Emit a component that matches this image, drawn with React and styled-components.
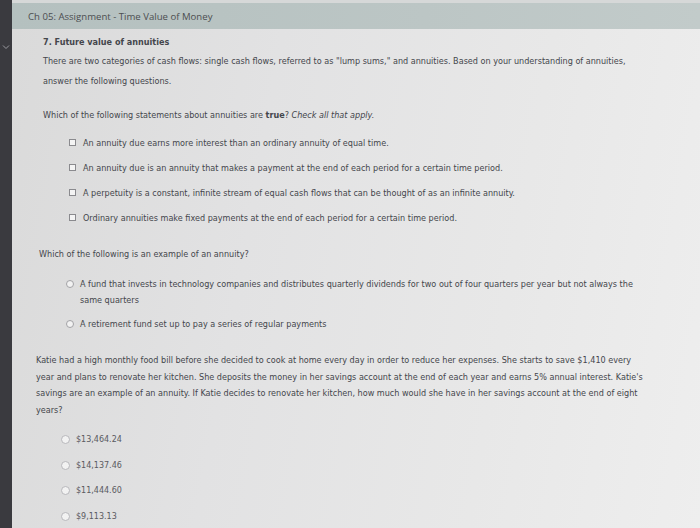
import React from 'react'
import styled, { createGlobalStyle } from 'styled-components'

const GlobalStyle = createGlobalStyle`
    html, body {
        margin: 0;
        padding: 0;
        background: #3a3a3f;
    }
`

const checks = [
    'An annuity due earns more interest than an ordinary annuity of equal time.',
    'An annuity due is an annuity that makes a payment at the end of each period for a certain time period.',
    'A perpetuity is a constant, infinite stream of equal cash flows that can be thought of as an infinite annuity.',
    'Ordinary annuities make fixed payments at the end of each period for a certain time period.',
]

const amounts = ['$13,464.24', '$14,137.46', '$11,444.60', '$9,113.13']

function App() {
    return (
        <Screen>
            <GlobalStyle />
            <Sidebar>
                <Chevron viewBox="0 0 8 6">
                    <path d="M1 1.5 L4 4.5 L7 1.5" fill="none" stroke="#9a9aa0" strokeWidth="1" />
                </Chevron>
            </Sidebar>
            <Main>
                <TopStrip />
                <Header>Ch 05: Assignment - Time Value of Money</Header>
                <Content>
                    <Block indent={31}>
                        <Heading>7. Future value of annuities</Heading>
                        <Para>
                            There are two categories of cash flows: single cash flows, referred to as "lump sums," and annuities. Based on your understanding of annuities,<br />
                            answer the following questions.
                        </Para>
                        <Question>
                            Which of the following statements about annuities are <b>true</b>? <i>Check all that apply.</i>
                        </Question>
                        <CheckList>
                            {checks.map(c => (
                                <CheckRow key={c}>
                                    <Box />
                                    <span>{c}</span>
                                </CheckRow>
                            ))}
                        </CheckList>
                    </Block>
                    <Block indent={27}>
                        <Question2>Which of the following is an example of an annuity?</Question2>
                        <RadioList>
                            <RadioRow>
                                <Circle />
                                <span>
                                    A fund that invests in technology companies and distributes quarterly dividends for two out of four quarters per year but not always the<br />
                                    same quarters
                                </span>
                            </RadioRow>
                            <RadioRow>
                                <Circle />
                                <span>A retirement fund set up to pay a series of regular payments</span>
                            </RadioRow>
                        </RadioList>
                    </Block>
                    <Block indent={24}>
                        <Story>
                            Katie had a high monthly food bill before she decided to cook at home every day in order to reduce her expenses. She starts to save $1,410 every<br />
                            year and plans to renovate her kitchen. She deposits the money in her savings account at the end of each year and earns 5% annual interest. Katie's<br />
                            savings are an example of an annuity. If Katie decides to renovate her kitchen, how much would she have in her savings account at the end of eight<br />
                            years?
                        </Story>
                        <Amounts>
                            {amounts.map(a => (
                                <AmountRow key={a}>
                                    <Circle />
                                    <span>{a}</span>
                                </AmountRow>
                            ))}
                        </Amounts>
                    </Block>
                </Content>
                <Bezel />
            </Main>
        </Screen>
    )
}

export default App

const Screen = styled.div`
    display: flex;
    width: 700px;
    height: 528px;
    overflow: hidden;
    font-family: "DejaVu Sans", Verdana, sans-serif;
    color: #44464c;
`
const Sidebar = styled.div`
    width: 12px;
    flex-shrink: 0;
    background: #3a3a3f;
    display: flex;
    flex-direction: column;
    align-items: center;
    padding-top: 44px;
    box-sizing: border-box;
`
const Chevron = styled.svg`
    width: 8px;
    height: 6px;
`
const Main = styled.div`
    flex: 1;
    display: flex;
    flex-direction: column;
    min-width: 0;
`
const TopStrip = styled.div`
    height: 3px;
    flex-shrink: 0;
    background: #d6d8d8;
`
const Header = styled.div`
    height: 26px;
    flex-shrink: 0;
    display: flex;
    align-items: center;
    padding-left: 16px;
    background: linear-gradient(90deg, #b4c0bf 0%, #bcc6c5 60%, #c2cbca 100%);
    font-family: "Open Sans", "Noto Sans", sans-serif;
    font-size: 9.6px;
    color: #4c4e50;
    box-shadow: 0 1px 0 #aab4b3;
`
const Content = styled.div`
    flex: 1;
    padding-top: 4px;
    background: linear-gradient(100deg, #dadada 0%, #e2e2e3 35%, #e8e8e8 70%, #eeeeee 100%);
    font-size: 8.1px;
`
const Block = styled.div`
    padding-left: ${p => p.indent}px;
`
const Heading = styled.div`
    font-weight: bold;
    line-height: 18px;
`
const Para = styled.div`
    line-height: 20px;
    white-space: nowrap;
`
const Question = styled.div`
    margin-top: 14px;
    line-height: 20px;
    b { font-weight: bold; }
    i { font-style: italic; }
`
const Question2 = styled.div`
    margin-top: 14px;
    line-height: 20px;
`
const CheckList = styled.div`
    display: flex;
    flex-direction: column;
    margin-top: 5px;
    padding-left: 26px;
`
const CheckRow = styled.div`
    display: flex;
    align-items: center;
    gap: 7px;
    height: 25px;
    white-space: nowrap;
`
const Box = styled.span`
    width: 5px;
    height: 5px;
    border: 1px solid #8a8a8e;
    background: #f4f4f4;
    flex-shrink: 0;
`
const RadioList = styled.div`
    display: flex;
    flex-direction: column;
    margin-top: 8px;
    padding-left: 27px;
`
const RadioRow = styled.div`
    display: flex;
    align-items: flex-start;
    gap: 6px;
    padding: 4px 0;
    line-height: 16px;
    white-space: nowrap;
`
const Circle = styled.span`
    width: 6px;
    height: 6px;
    margin-top: 4px;
    border-radius: 50%;
    border: 1px solid #a2a2a6;
    background: #f2f2f2;
    flex-shrink: 0;
`
const Story = styled.div`
    margin-top: 16px;
    line-height: 16.7px;
    white-space: nowrap;
`
const Amounts = styled.div`
    display: flex;
    flex-direction: column;
    margin-top: 8px;
    padding-left: 25px;
`
const AmountRow = styled.div`
    display: flex;
    align-items: center;
    gap: 6px;
    height: 25.5px;
    font-size: 8px;
    color: #5a5a60;
    ${Circle} {
        margin-top: 0;
        width: 7px;
        height: 7px;
        border-color: #b8b8bc;
    }
`
const Bezel = styled.div`
    height: 4px;
    background: #3a3a3f;
`
